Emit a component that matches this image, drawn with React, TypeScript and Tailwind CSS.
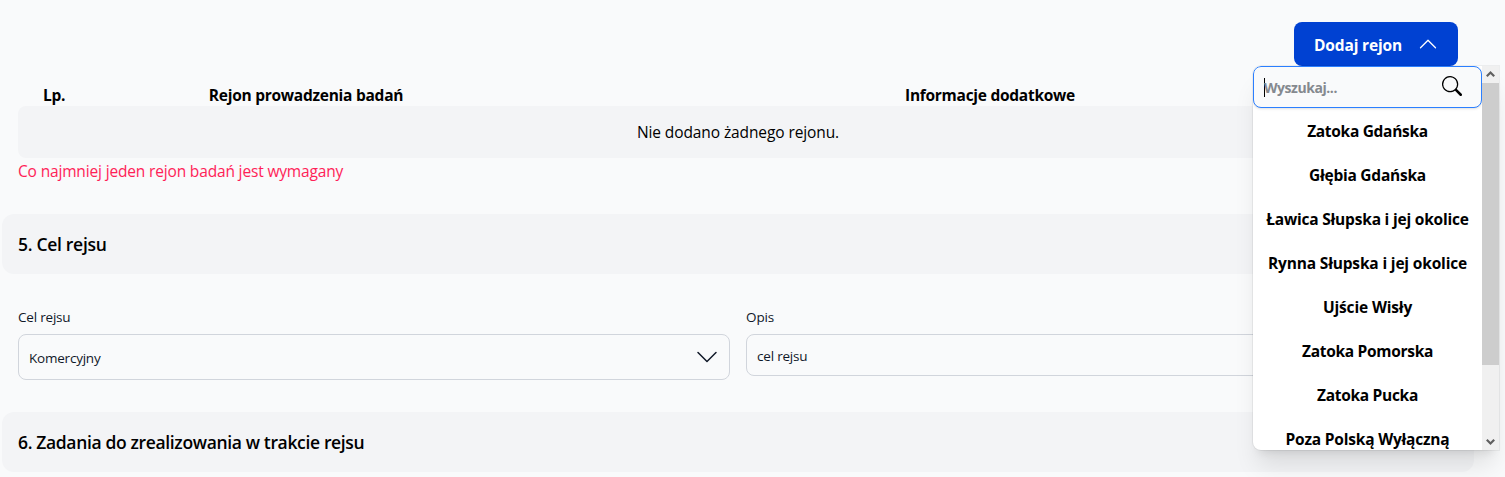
import { BsChevronDown, BsChevronUp, BsSearch } from "react-icons/bs";

const regions = [
  { name: "Zatoka Gdańska", tracking: "tracking-[-0.3px]" },
  { name: "Głębia Gdańska", tracking: "tracking-[-0.24px]" },
  { name: "Ławica Słupska i jej okolice", tracking: "tracking-[-0.2px]" },
  { name: "Rynna Słupska i jej okolice", tracking: "tracking-[-0.17px]" },
  { name: "Ujście Wisły", tracking: "tracking-[-0.15px]" },
  { name: "Zatoka Pomorska", tracking: "tracking-[-0.3px]" },
  { name: "Zatoka Pucka", tracking: "tracking-[-0.3px]" },
  { name: "Poza Polską Wyłączną", tracking: "tracking-[-0.2px]" },
];

function SectionHeader({ title, tracking }: { title: string; tracking: string }) {
  return (
    <header className="flex h-[60px] items-center rounded-xl bg-gray-100 px-4">
      <h2 className={"text-[17.5px] leading-7 font-semibold whitespace-nowrap " + tracking}>{title}</h2>
    </header>
  );
}

function RegionMenu() {
  return (
    <div className="absolute top-11 -right-[41px] z-10 flex h-96 w-[246px] overflow-hidden rounded-lg rounded-r-none bg-white shadow-xl ring-1 ring-black/5">
      <div className="min-w-0 flex-1 overflow-hidden">
        <label className="flex h-[42px] items-center rounded-lg border border-blue-500 bg-gray-50 pr-[19px] pl-2.5 shadow-sm">
          <span className="h-[19px] w-px bg-black" />
          <span className="-ml-px flex-1 pt-0.5 text-sm font-bold tracking-[-0.45px] text-[#85898f]">Wyszukaj...</span>
          <BsSearch className="size-5 -translate-y-px" />
        </label>
        <ul className="pt-0.5">
          {regions.map((region) => (
            <li key={region.name} className="flex h-11 items-center justify-center">
              <span className={"text-[15.5px] font-bold whitespace-nowrap " + region.tracking}>{region.name}</span>
            </li>
          ))}
        </ul>
      </div>
      <div className="flex w-[17px] flex-col items-center bg-[#f0f0f0]">
        <svg viewBox="0 0 17 17" className="size-[17px]" fill="none" stroke="#606060" strokeWidth="2.2">
          <path d="M4.8 10.2 8.5 6.5l3.7 3.7" />
        </svg>
        <div className="h-[282px] w-full bg-[#cdcdcd]" />
        <svg viewBox="0 0 17 17" className="mt-auto size-[17px]" fill="none" stroke="#606060" strokeWidth="2.2">
          <path d="m4.8 6.8 3.7 3.7 3.7-3.7" />
        </svg>
      </div>
    </div>
  );
}

export default function App() {
  return (
    <main className="h-[477px] overflow-hidden bg-gray-50 pr-[31px] pl-0.5 font-['Open_Sans','Noto_Sans',sans-serif] text-black">
      <section className="h-[214px] px-4 pt-[22px]">
        <div className="flex justify-end">
          <div className="relative">
            <button className="flex h-11 w-[164px] items-center justify-between rounded-lg bg-[#0041d2] px-5 font-bold text-white">
              <span className="pt-[3px] text-[15.5px] tracking-[-0.15px] whitespace-nowrap">Dodaj rejon</span>
              <BsChevronUp className="size-5" />
            </button>
            <RegionMenu />
          </div>
        </div>
        <div className="mt-[17px] mb-[-1px] grid grid-cols-[5%_30%_65%] text-center text-[15.5px] leading-6 font-bold">
          <span className="tracking-[-0.3px]">Lp.</span>
          <span className="tracking-[-0.26px]">Rejon prowadzenia badań</span>
          <span className="tracking-[-0.27px]">Informacje dodatkowe</span>
        </div>
        <div className="flex h-[52px] items-center justify-center rounded-lg bg-gray-100 text-[15.5px]">
          <span className="pt-px tracking-[-0.1px]">Nie dodano żadnego rejonu.</span>
        </div>
        <p className="pt-px text-[15.5px] leading-6 tracking-[-0.16px] text-rose-500">
          Co najmniej jeden rejon badań jest wymagany
        </p>
      </section>
      <SectionHeader title="5. Cel rejsu" tracking="tracking-[-0.3px]" />
      <section className="grid h-[138px] grid-cols-2 gap-4 px-4 pt-[33px] text-gray-900">
        <div>
          <p className="mb-[7px] text-[13.5px] leading-5 tracking-[-0.2px]">Cel rejsu</p>
          <div className="flex h-[46px] items-center justify-between rounded-lg border border-gray-300 pr-2.5 pl-2.5">
            <span className="pt-[3px] text-[13.5px] tracking-[-0.22px]">Komercyjny</span>
            <BsChevronDown className="size-6" />
          </div>
        </div>
        <div>
          <p className="mb-[7px] text-[13.5px] leading-5 tracking-[-0.1px]">Opis</p>
          <div className="flex h-[42px] items-center rounded-lg border border-gray-300 px-2.5">
            <span className="pt-[3px] text-[13.5px] tracking-[-0.2px]">cel rejsu</span>
          </div>
        </div>
      </section>
      <SectionHeader title="6. Zadania do zrealizowania w trakcie rejsu" tracking="tracking-[-0.35px]" />
    </main>
  );
}
